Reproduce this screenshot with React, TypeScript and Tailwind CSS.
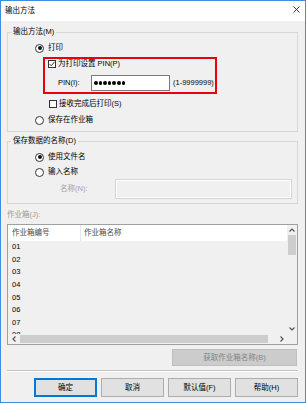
import React from "react";

const Radio = ({ checked }: { checked?: boolean }) => (
  <span className="w-[9px] h-[9px] rounded-full border border-[#333333] bg-white flex items-center justify-center shrink-0">
    {checked && <span className="w-[4px] h-[4px] rounded-full bg-[#111111]" />}
  </span>
);

const Check = ({ checked }: { checked?: boolean }) => (
  <span className="w-[8px] h-[8px] border border-[#333333] bg-white flex items-center justify-center shrink-0">
    {checked && (
      <svg width="6" height="6" viewBox="0 0 6 6">
        <path d="M0.6 3.1 L2.3 4.8 L5.4 0.9" fill="none" stroke="#222" strokeWidth="0.9" />
      </svg>
    )}
  </span>
);

const rows = ["01", "02", "03", "04", "05", "06", "07", "08"];

export default function App() {
  return (
    <div className="w-[306px] h-[403px] bg-[#f0f0f0] border border-[#3d8ede] flex flex-col text-[7.5px] text-black font-['Liberation_Sans','Noto_Sans_CJK_SC',sans-serif] overflow-hidden">
      {/* Title bar */}
      <div className="h-[20px] bg-white flex items-center justify-between pl-[4px] pr-[5px] shrink-0">
        <span className="leading-[12px]">输出方法</span>
        <svg width="7" height="7" viewBox="0 0 7 7" className="mb-[3px]">
          <path d="M0.5 0.5 L6.5 6.5 M6.5 0.5 L0.5 6.5" stroke="#222" strokeWidth="0.9" />
        </svg>
      </div>

      <div className="flex flex-col pl-[6px] pr-[7px]">
        {/* Group 1 */}
        <fieldset className="mt-[5px] border border-[#d7d7d7] min-w-0 pl-[3px] pr-0 pb-[5px] m-0">
          <legend className="px-[2px] leading-[12px]">输出方法(M)</legend>
          <div className="flex items-center gap-[4px] h-[12px] mt-[4px] ml-[24px] leading-[12px]">
            <Radio checked />
            <span>打印</span>
          </div>
          <div className="mt-[3px] ml-[32px] w-[174px] h-[37px] border-2 border-[#e8000b] flex flex-col">
            <div className="flex items-center gap-[2px] h-[10px] pl-[3px] leading-[12px]">
              <Check checked />
              <span>为打印设置 PIN(P)</span>
            </div>
            <div className="flex items-center mt-[6px] h-[16px] pl-[13px] leading-[12px]">
              <span className="w-[33px]">PIN(I):</span>
              <span className="w-[79px] h-[16px] border border-[#7a7a7a] bg-white flex items-center pl-[2px] gap-[1px]">
                {[0, 1, 2, 3, 4, 5, 6].map((i) => (
                  <span key={i} className="w-[3.6px] h-[3.6px] rounded-full bg-black" />
                ))}
              </span>
              <span className="ml-[3px]">(1-9999999)</span>
            </div>
          </div>
          <div className="flex items-center gap-[2px] h-[12px] mt-[4px] ml-[38px] leading-[12px]">
            <Check />
            <span>接收完成后打印(S)</span>
          </div>
          <div className="flex items-center gap-[4px] h-[12px] mt-[4px] ml-[24px] leading-[12px]">
            <Radio />
            <span>保存在作业箱</span>
          </div>
        </fieldset>

        {/* Group 2 */}
        <fieldset className="mt-[3px] border border-[#d7d7d7] min-w-0 pl-[3px] pr-0 pb-[4px] m-0">
          <legend className="px-[2px] leading-[12px]">保存数据的名称(D)</legend>
          <div className="flex items-center gap-[4px] h-[12px] mt-[4px] ml-[24px] leading-[12px]">
            <Radio checked />
            <span>使用文件名</span>
          </div>
          <div className="flex items-center gap-[4px] h-[12px] mt-[3px] ml-[24px] leading-[12px]">
            <Radio />
            <span>输入名称</span>
          </div>
          <div className="flex items-center h-[20px] mt-[1px] ml-[49px] leading-[12px]">
            <span className="w-[55px] text-[#a3a3a3]">名称(N):</span>
            <span className="w-[177px] h-[20px] border border-[#d4d4d4] bg-[#f0f0f0] shadow-[inset_0_0_0_1px_#ffffff]" />
          </div>
        </fieldset>

        {/* Job box */}
        <div className="mt-[5px] h-[12px] leading-[12px] text-[#9b9b9b]">作业箱(J):</div>
        <div className="mt-[3px] h-[121px] border border-[#a0a0a0] flex flex-col">
          <div className="flex h-[109px]">
            <div className="flex-1 flex flex-col overflow-hidden">
              <div className="h-[16px] bg-white flex items-center shrink-0 text-[#4a4a4a] leading-[12px]">
                <span className="w-[72px] pl-[4px]">作业箱编号</span>
                <span className="w-[1px] h-[16px] bg-[#e8e8e8]" />
                <span className="pl-[3px]">作业箱名称</span>
              </div>
              <div className="flex flex-col">
                {rows.map((r) => (
                  <div key={r} className="h-[12.6px] shrink-0 flex items-center pl-[4px] leading-[12px]">
                    {r}
                  </div>
                ))}
              </div>
            </div>
            <div className="w-[10px] bg-[#f0f0f0] flex flex-col items-center">
              <div className="h-[10px] w-full flex items-center justify-center">
                <svg width="6" height="4" viewBox="0 0 6 4">
                  <path d="M0.5 3.5 L3 1 L5.5 3.5" fill="none" stroke="#555" strokeWidth="1.2" />
                </svg>
              </div>
              <div className="w-[8px] h-[20px] bg-[#cdcdcd]" />
              <div className="flex-1" />
              <div className="h-[10px] w-full flex items-center justify-center">
                <svg width="6" height="4" viewBox="0 0 6 4">
                  <path d="M0.5 0.5 L3 3 L5.5 0.5" fill="none" stroke="#555" strokeWidth="1.2" />
                </svg>
              </div>
            </div>
          </div>
          <div className="flex h-[10px]">
            <div className="flex-1 flex items-center bg-[#f0f0f0]">
              <div className="w-[12px] h-[10px] flex items-center justify-center">
                <svg width="4" height="6" viewBox="0 0 4 6">
                  <path d="M3.5 0.5 L1 3 L3.5 5.5" fill="none" stroke="#555" strokeWidth="1.2" />
                </svg>
              </div>
              <div className="w-[248px] h-[8px] bg-[#cdcdcd]" />
              <div className="flex-1" />
              <div className="w-[11px] h-[10px] flex items-center justify-center">
                <svg width="4" height="6" viewBox="0 0 4 6">
                  <path d="M0.5 0.5 L3 3 L0.5 5.5" fill="none" stroke="#555" strokeWidth="1.2" />
                </svg>
              </div>
            </div>
            <div className="w-[10px] bg-[#f0f0f0]" />
          </div>
        </div>

        {/* Get names button */}
        <div className="mt-[4px] flex justify-end pr-[1px]">
          <div className="w-[125px] h-[17px] bg-[#cccccc] border border-[#bfbfbf] flex items-center justify-center text-[#838383] leading-[12px]">
            获取作业箱名称(B)
          </div>
        </div>

        {/* Separator */}
        <div className="mt-[4px] h-[2px] border-t border-[#c4c4c4] border-b border-b-white" />

        {/* Buttons */}
        <div className="mt-[6px] flex justify-end gap-[4px] pr-[0px]">
          <div className="w-[63px] h-[19px] bg-[#e1e1e1] border-2 border-[#0078d7] flex items-center justify-center leading-[12px]">确定</div>
          <div className="w-[63px] h-[19px] bg-[#e1e1e1] border border-[#adadad] flex items-center justify-center leading-[12px]">取消</div>
          <div className="w-[63px] h-[19px] bg-[#e1e1e1] border border-[#adadad] flex items-center justify-center leading-[12px]">默认值(F)</div>
          <div className="w-[63px] h-[19px] bg-[#e1e1e1] border border-[#adadad] flex items-center justify-center leading-[12px]">帮助(H)</div>
        </div>
      </div>
    </div>
  );
}
